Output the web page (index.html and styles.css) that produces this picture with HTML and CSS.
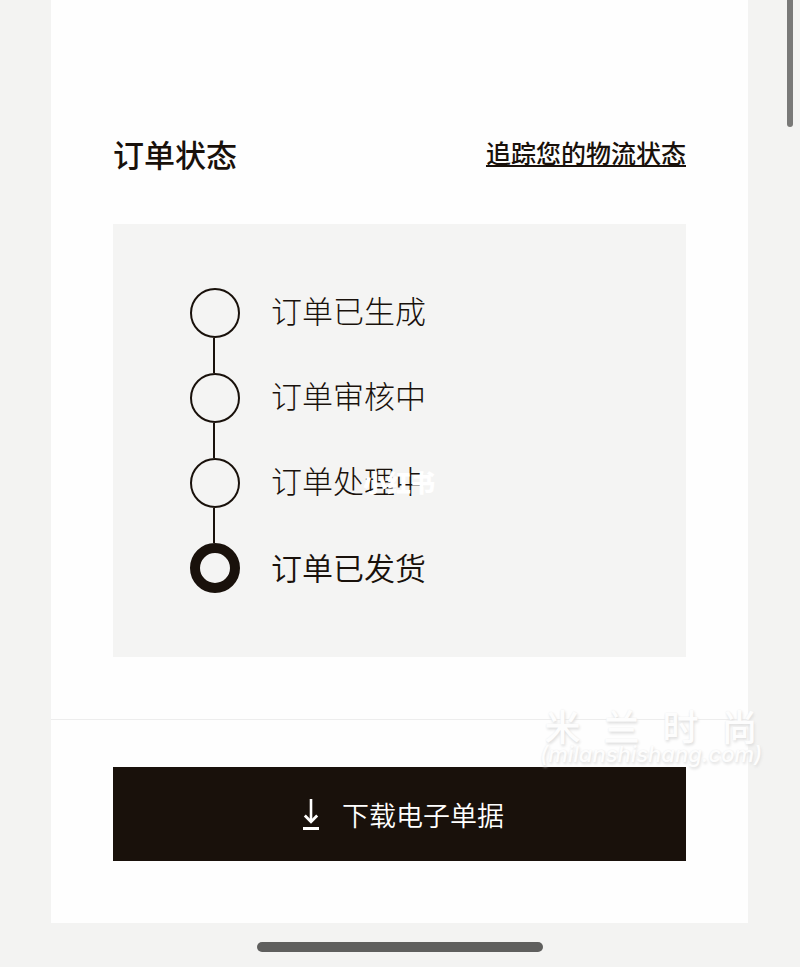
FILE: index.html
```html
<!DOCTYPE html>
<html lang="zh-CN">
<head>
<meta charset="utf-8">
<meta name="viewport" content="width=device-width, initial-scale=1">
<title>订单状态</title>
<link rel="stylesheet" href="styles.css">
</head>
<body>
<main class="card">
  <section class="status">
    <header class="status-header">
      <h1 class="title">订单状态</h1>
      <a class="track-link" href="#track">追踪您的物流状态</a>
    </header>
    <ol class="steps">
      <li class="step"><span class="dot"></span><span class="label">订单已生成</span></li>
      <li class="step"><span class="dot"></span><span class="label">订单审核中</span></li>
      <li class="step"><span class="dot"></span><span class="label">订单处理中<span class="stamp">小红书</span></span></li>
      <li class="step current" aria-current="step"><span class="dot"></span><span class="label">订单已发货</span></li>
    </ol>
  </section>
  <section class="actions">
    <button class="download" type="button">
      <svg class="download-icon" width="16" height="32" viewBox="0 0 16 32" fill="none" stroke="currentColor" aria-hidden="true">
        <path d="M8 1V24" stroke-width="2.6"/>
        <path d="M1.8 17.6L8 23.8L14.2 17.6" stroke-width="2.8"/>
        <path d="M0 30.5H16" stroke-width="3"/>
      </svg>
      <span>下载电子单据</span>
    </button>
  </section>
</main>
<div class="watermark">
  <div class="watermark-name"><span>米</span><span>兰</span><span>时</span><span>尚</span></div>
  <div class="watermark-site">(milanshishang.com)</div>
</div>
<div class="scroll-thumb"></div>
<div class="home-bar"></div>
</body>
</html>
```
FILE: styles.css
```css
* {
  box-sizing: border-box;
}

body {
  margin: 0;
  padding: 0 52px 44px 51px;
  background: #f3f3f2;
  color: #19110b;
  font-family: "Noto Sans CJK SC", sans-serif;
}

.card {
  background: #fefefe;
}

.status {
  padding: 132px 62px 62px;
}

.status-header {
  display: flex;
  justify-content: space-between;
  align-items: flex-start;
  height: 92px;
}

.title {
  margin: 0;
  font-size: 31px;
  line-height: 44px;
  font-weight: 500;
}

.track-link {
  color: inherit;
  font-size: 25px;
  line-height: 40px;
  font-weight: 500;
  text-decoration: underline;
  text-decoration-thickness: 2px;
  text-underline-offset: 2px;
  text-decoration-skip-ink: none;
}

.steps {
  display: flex;
  flex-direction: column;
  gap: 35px;
  margin: 0;
  padding: 64px 77px;
  list-style: none;
  background: #f4f4f3;
}

.step {
  position: relative;
  display: flex;
  align-items: flex-start;
  gap: 31px;
  height: 50px;
}

.step:not(:last-child)::after {
  content: "";
  position: absolute;
  top: 100%;
  left: 23px;
  width: 2px;
  height: 35px;
  background: #19110b;
}

.dot {
  width: 50px;
  height: 50px;
  border: 2px solid #19110b;
  border-radius: 50%;
}

.label {
  position: relative;
  font-size: 31px;
  line-height: 44px;
  font-weight: 300;
}

.current .dot {
  border-width: 10px;
}

.current .label {
  line-height: 48px;
  font-weight: 350;
}

.stamp {
  position: absolute;
  top: 2px;
  right: -9px;
  color: #fff;
  font-size: 24px;
  font-weight: 900;
}

.actions {
  padding: 47px 62px 62px;
  border-top: 1px solid #ededed;
}

.download {
  display: flex;
  justify-content: center;
  align-items: center;
  gap: 23px;
  width: 100%;
  height: 94px;
  padding: 0 0 0 8px;
  border: 0;
  background: #19110b;
  color: #fff;
  font-family: inherit;
  font-size: 27px;
  font-weight: 350;
}

.watermark {
  position: absolute;
  top: 706px;
  right: 31px;
  width: 236px;
  color: #fdfdfd;
  text-shadow: 1px 2px 3px #dedede, 0 0 2px #efefef;
}

.watermark-name {
  display: flex;
  justify-content: space-around;
  font-size: 36px;
  line-height: 38px;
  font-weight: 500;
}

.watermark-site {
  font-family: Inter, sans-serif;
  font-size: 22px;
  line-height: 20px;
  font-weight: 500;
  font-style: italic;
  text-align: center;
}

.scroll-thumb {
  position: absolute;
  top: 0;
  right: 7px;
  width: 6px;
  height: 127px;
  border-radius: 0 0 3px 3px;
  background: #797978;
}

.home-bar {
  position: absolute;
  top: 942px;
  left: 50%;
  width: 286px;
  height: 10px;
  border-radius: 5px;
  background: #5f5f5e;
  transform: translateX(-50%);
}
```
